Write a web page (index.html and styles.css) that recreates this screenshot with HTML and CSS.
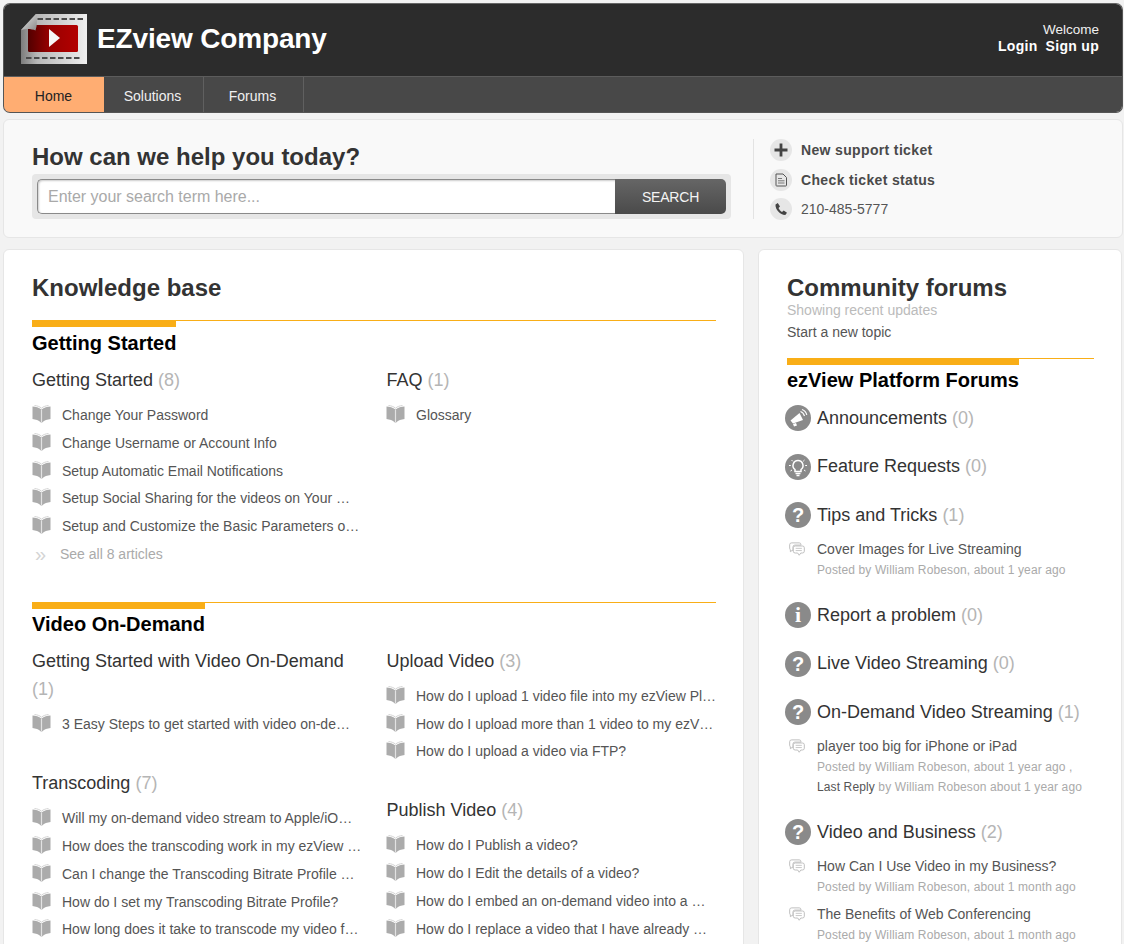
FILE: index.html
```html
<!DOCTYPE html>
<html lang="en">
<head>
<meta charset="utf-8">
<title>EZview Company</title>
<link rel="stylesheet" href="styles.css">
</head>
<body>
<svg class="defs" width="0" height="0" aria-hidden="true">
  <defs>
    <symbol id="book" viewBox="0 0 19 18">
      <path d="M0.500 1.500C3.500 1.500 7 2.500 9.500 4.500 12 2.500 15.500 1.500 18.500 1.500V14C15.500 14.300 12 15.500 10.500 17.300Q9.500 17.800 8.500 17.300C7 15.500 3.500 14.300 0.500 14Z" fill="#ababab"/>
      <path d="M9.500 4.500V17.300" stroke="#e2e2e2" stroke-width="1.200"/>
      <path d="M2.500 0.500C5 0.700 7.800 1.600 9.500 3.200 11.200 1.600 14 0.700 16.500 0.500" fill="none" stroke="#d4d4d4" stroke-width="1"/>
    </symbol>
    <symbol id="chat" viewBox="0 0 18 17">
      <path d="M3 1H11.500Q13.500 1 13.500 3V3.500H6.500Q4.500 3.500 4.500 5.500V9.500H3.500L1.500 11V8.800Q0.700 8.300 0.700 7V3Q0.700 1 3 1Z" fill="#fff" stroke="#bdbdbd" stroke-width="1.100"/>
      <path d="M7 4.500H15Q17.300 4.500 17.300 6.500V10.500Q17.300 12.500 15 12.500H13.300L11.500 15 9.800 12.500H7Q4.800 12.500 4.800 10.500V6.500Q4.800 4.500 7 4.500Z" fill="#fff" stroke="#bdbdbd" stroke-width="1.100"/>
      <path d="M7.500 7.200H14.500M7.500 9.700H14.500" stroke="#c8c8c8" stroke-width="1.100"/>
    </symbol>
  </defs>
</svg>

<div class="page">
  <header class="masthead">
    <div class="topbar">
      <div class="brand">
        <svg class="logo" width="66" height="50" viewBox="0 0 66 50" aria-hidden="true">
          <defs>
            <linearGradient id="frame" x1="0" y1="0" x2="1" y2="0">
              <stop offset="0" stop-color="#7c7c7c"/>
              <stop offset="0.25" stop-color="#b8b8b8"/>
              <stop offset="0.7" stop-color="#d8d8d8"/>
              <stop offset="1" stop-color="#f0f0f0"/>
            </linearGradient>
            <linearGradient id="reel" x1="0" y1="0" x2="1" y2="0">
              <stop offset="0" stop-color="#520000"/>
              <stop offset="0.45" stop-color="#9a0000"/>
              <stop offset="1" stop-color="#b30000"/>
            </linearGradient>
            <linearGradient id="curl" x1="0" y1="0" x2="1" y2="1">
              <stop offset="0" stop-color="#e8e8e8"/>
              <stop offset="1" stop-color="#8a8a8a"/>
            </linearGradient>
          </defs>
          <path d="M15 0H66V50H0V16Z" fill="url(#frame)"/>
          <rect x="7" y="11" width="50" height="27" rx="1.500" fill="url(#reel)"/>
          <path d="M15 0 0 16C5 14.500 11 15 14.500 16.500 16.500 11 16 5 15 0Z" fill="url(#curl)"/>
          <path d="M28 15 39 24 28 33Z" fill="#f6f6f6"/>
          <g fill="#4a4a4a">
            <rect x="16.500" y="4" width="5.500" height="2"/><rect x="24.500" y="4" width="5.500" height="2"/><rect x="32.500" y="4" width="5.500" height="2"/><rect x="40.500" y="4" width="5.500" height="2"/><rect x="48.500" y="4" width="5.500" height="2"/><rect x="56.500" y="4" width="5.500" height="2"/>
            <rect x="5" y="43" width="5.500" height="2"/><rect x="13" y="43" width="5.500" height="2"/><rect x="21" y="43" width="5.500" height="2"/><rect x="29" y="43" width="5.500" height="2"/><rect x="37" y="43" width="5.500" height="2"/><rect x="45" y="43" width="5.500" height="2"/><rect x="53" y="43" width="5.500" height="2"/>
          </g>
        </svg>
        <div class="company">EZview Company</div>
      </div>
      <div class="account">
        <div class="welcome">Welcome</div>
        <div class="account-links"><a>Login</a><a>Sign up</a></div>
      </div>
    </div>
    <nav class="nav">
      <a class="nav-item active">Home</a>
      <a class="nav-item">Solutions</a>
      <a class="nav-item">Forums</a>
    </nav>
  </header>

  <section class="help card">
    <div class="help-main">
      <h1 class="help-title">How can we help you today?</h1>
      <div class="search">
        <div class="search-input">Enter your search term here...</div>
        <div class="search-button">SEARCH</div>
      </div>
    </div>
    <ul class="help-links">
      <li><span class="help-icon"><svg width="16" height="16" viewBox="0 0 16 16"><path d="M6.600 1.500H9.400V6.600H14.500V9.400H9.400V14.500H6.600V9.400H1.500V6.600H6.600Z" fill="#444"/></svg></span><b>New support ticket</b></li>
      <li><span class="help-icon"><svg width="14" height="14" viewBox="0 0 14 14"><path d="M2 1H9L12.500 4.500V12.300Q12.500 13 11.800 13H2.700Q2 13 2 12.300Z" fill="none" stroke="#555" stroke-width="1"/><path d="M4 5.500H8M4 7.800H10.500M4 10H10.500" stroke="#777" stroke-width="1"/></svg></span><b>Check ticket status</b></li>
      <li><span class="help-icon"><svg width="14" height="14" viewBox="0 0 14 14"><path d="M1.500 2.500 3.800 1 6 4.500 4.500 6C5 7.500 6.500 9 8 10L9.700 8.500 13 10.800 11.300 13C6.500 13.200 1 7.500 1.500 2.500Z" fill="#444"/></svg></span>210-485-5777</li>
    </ul>
  </section>

  <div class="columns">
    <main class="card kb">
      <h2 class="card-title">Knowledge base</h2>

      <section class="group">
        <h3 class="group-title">Getting Started</h3>
        <div class="group-grid">
          <div class="topic-col">
            <div class="topic">
              <h4 class="topic-title">Getting Started <span class="count">(8)</span></h4>
              <ul class="articles">
                <li><svg class="book"><use href="#book"/></svg><span>Change Your Password</span></li>
                <li><svg class="book"><use href="#book"/></svg><span>Change Username or Account Info</span></li>
                <li><svg class="book"><use href="#book"/></svg><span>Setup Automatic Email Notifications</span></li>
                <li><svg class="book"><use href="#book"/></svg><span>Setup Social Sharing for the videos on Your …</span></li>
                <li><svg class="book"><use href="#book"/></svg><span>Setup and Customize the Basic Parameters o…</span></li>
              </ul>
              <div class="see-all"><span class="chevrons">»</span>See all 8 articles</div>
            </div>
          </div>
          <div class="topic-col">
            <div class="topic">
              <h4 class="topic-title">FAQ <span class="count">(1)</span></h4>
              <ul class="articles">
                <li><svg class="book"><use href="#book"/></svg><span>Glossary</span></li>
              </ul>
            </div>
          </div>
        </div>
      </section>

      <section class="group">
        <h3 class="group-title">Video On-Demand</h3>
        <div class="group-grid">
          <div class="topic-col">
            <div class="topic">
              <h4 class="topic-title">Getting Started with Video On-Demand <span class="count">(1)</span></h4>
              <ul class="articles">
                <li><svg class="book"><use href="#book"/></svg><span>3 Easy Steps to get started with video on-de…</span></li>
              </ul>
            </div>
            <div class="topic">
              <h4 class="topic-title">Transcoding <span class="count">(7)</span></h4>
              <ul class="articles">
                <li><svg class="book"><use href="#book"/></svg><span>Will my on-demand video stream to Apple/iO…</span></li>
                <li><svg class="book"><use href="#book"/></svg><span>How does the transcoding work in my ezView …</span></li>
                <li><svg class="book"><use href="#book"/></svg><span>Can I change the Transcoding Bitrate Profile …</span></li>
                <li><svg class="book"><use href="#book"/></svg><span>How do I set my Transcoding Bitrate Profile?</span></li>
                <li><svg class="book"><use href="#book"/></svg><span>How long does it take to transcode my video f…</span></li>
              </ul>
            </div>
          </div>
          <div class="topic-col">
            <div class="topic">
              <h4 class="topic-title">Upload Video <span class="count">(3)</span></h4>
              <ul class="articles">
                <li><svg class="book"><use href="#book"/></svg><span>How do I upload 1 video file into my ezView Pl…</span></li>
                <li><svg class="book"><use href="#book"/></svg><span>How do I upload more than 1 video to my ezV…</span></li>
                <li><svg class="book"><use href="#book"/></svg><span>How do I upload a video via FTP?</span></li>
              </ul>
            </div>
            <div class="topic">
              <h4 class="topic-title">Publish Video <span class="count">(4)</span></h4>
              <ul class="articles">
                <li><svg class="book"><use href="#book"/></svg><span>How do I Publish a video?</span></li>
                <li><svg class="book"><use href="#book"/></svg><span>How do I Edit the details of a video?</span></li>
                <li><svg class="book"><use href="#book"/></svg><span>How do I embed an on-demand video into a …</span></li>
                <li><svg class="book"><use href="#book"/></svg><span>How do I replace a video that I have already …</span></li>
              </ul>
            </div>
          </div>
        </div>
      </section>
    </main>

    <aside class="card forums">
      <h2 class="card-title">Community forums</h2>
      <div class="forums-sub">Showing recent updates</div>
      <a class="forums-new">Start a new topic</a>

      <section class="group forum-group">
        <h3 class="group-title">ezView Platform Forums</h3>
        <div class="forum-list">

        <div class="forum">
          <div class="forum-head">
            <span class="badge"><svg width="26" height="26" viewBox="0 0 26 26"><path d="M5.500 15.500 14.500 8 18 15 8 18.500Z" fill="#fff"/><path d="M8 19 11 18 12 20.500 9 21.500Z" fill="#fff"/><path d="M15.500 6.500Q18.500 7.500 19.500 11M17 4.500Q21 6 21.800 10" fill="none" stroke="#fff" stroke-width="1.100"/></svg></span>
            <span>Announcements <span class="count">(0)</span></span>
          </div>
        </div>

        <div class="forum">
          <div class="forum-head">
            <span class="badge"><svg width="26" height="26" viewBox="0 0 26 26"><path d="M13 6.500A5 5 0 0 1 16 15.500V17.500H10V15.500A5 5 0 0 1 13 6.500Z" fill="none" stroke="#fff" stroke-width="1.500"/><path d="M10.500 19.500H15.500M11.500 21.500H14.500" stroke="#fff" stroke-width="1.300"/><path d="M6.500 6 7.800 7.300M19.500 6 18.200 7.300M4 11.500H5.800M20.200 11.500H22M5.500 17 7 16M20.500 17 19 16" stroke="#fff" stroke-width="1"/></svg></span>
            <span>Feature Requests <span class="count">(0)</span></span>
          </div>
        </div>

        <div class="forum has-posts">
          <div class="forum-head">
            <span class="badge badge-text">?</span>
            <span>Tips and Tricks <span class="count">(1)</span></span>
          </div>
          <div class="post">
            <svg class="chat"><use href="#chat"/></svg>
            <div>
              <div class="post-title">Cover Images for Live Streaming</div>
              <div class="post-meta">Posted by William Robeson, about 1 year ago</div>
            </div>
          </div>
        </div>

        <div class="forum">
          <div class="forum-head">
            <span class="badge badge-text badge-info">i</span>
            <span>Report a problem <span class="count">(0)</span></span>
          </div>
        </div>

        <div class="forum">
          <div class="forum-head">
            <span class="badge badge-text">?</span>
            <span>Live Video Streaming <span class="count">(0)</span></span>
          </div>
        </div>

        <div class="forum has-posts">
          <div class="forum-head">
            <span class="badge badge-text">?</span>
            <span>On-Demand Video Streaming <span class="count">(1)</span></span>
          </div>
          <div class="post">
            <svg class="chat"><use href="#chat"/></svg>
            <div>
              <div class="post-title">player too big for iPhone or iPad</div>
              <div class="post-meta">Posted by William Robeson, about 1 year ago ,</div>
              <div class="post-meta"><span class="reply">Last Reply</span> by William Robeson about 1 year ago</div>
            </div>
          </div>
        </div>

        <div class="forum has-posts">
          <div class="forum-head">
            <span class="badge badge-text">?</span>
            <span>Video and Business <span class="count">(2)</span></span>
          </div>
          <div class="post">
            <svg class="chat"><use href="#chat"/></svg>
            <div>
              <div class="post-title">How Can I Use Video in my Business?</div>
              <div class="post-meta">Posted by William Robeson, about 1 month ago</div>
            </div>
          </div>
          <div class="post">
            <svg class="chat"><use href="#chat"/></svg>
            <div>
              <div class="post-title">The Benefits of Web Conferencing</div>
              <div class="post-meta">Posted by William Robeson, about 1 month ago</div>
            </div>
          </div>
        </div>

        </div>
      </section>
    </aside>
  </div>
</div>
</body>
</html>
```
FILE: styles.css
```css
* { box-sizing: border-box; }
html, body { margin: 0; padding: 0; height: 944px; overflow: hidden; }
body {
  background: #f2f2f2;
  font-family: "Liberation Sans", Arial, sans-serif;
  font-size: 14px;
  color: #555;
}
h1, h2, h3, h4, ul { margin: 0; padding: 0; font-size: inherit; }
ul { list-style: none; }
.defs { display: block; height: 0; }
.page { padding: 3px 1px 0 3px; }

.masthead { border: 1px solid #555; border-top-color: #666; border-radius: 7px; overflow: hidden; height: 110px; }
.topbar { height: 72px; background: #2c2c2c; display: flex; justify-content: space-between; padding: 10px 23px 0 17px; }
.brand { display: flex; align-items: flex-start; }
.logo { flex: none; }
.company { font-size: 28px; font-weight: bold; color: #fff; line-height: 32px; margin: 9px 0 0 10px; letter-spacing: -0.150px; }
.account { text-align: right; color: #f0f0f0; line-height: 16px; padding-top: 8px; }
.welcome { font-size: 13.500px; }
.account-links { font-weight: bold; color: #fff; display: flex; gap: 8px; justify-content: flex-end; letter-spacing: 0.300px; }
.nav { height: 36px; background: #484848; border-top: 1px solid #5c5c5c; display: flex; }
.nav-item { width: 100px; line-height: 38px; text-align: center; color: #f0f0f0; border-right: 1px solid #606060; padding-right: 2px; }
.nav-item.active { background: #ffad72; color: #222; border-right: 0; padding-right: 1px; }

.card { background: #fff; border: 1px solid #e6e6e6; border-radius: 6px; }
.help { background: #f9f9f9; margin-top: 6px; height: 119px; display: flex; padding: 18px 0 0 28px; }
.help-main { width: 699px; }
.help-title { font-size: 24px; font-weight: bold; color: #333; line-height: 38px; }
.search { height: 45px; margin-top: -2px; background: #e6e6e6; border-radius: 4px; padding: 5px; display: flex; }
.search-input { flex: 1; border: 1px solid #8a8a8a; border-right: 0; border-radius: 5px 0 0 5px; background: #fff; box-shadow: inset 1px 1px 2px #ccc; font-size: 16px; line-height: 33px; color: #a9a9a9; padding-left: 10px; letter-spacing: -0.020px; }
.search-button { width: 111px; background: linear-gradient(#666, #4a4a4a); color: #f4f4f4; border-radius: 0 5px 5px 0; text-align: center; line-height: 36px; letter-spacing: -0.200px; }
.help-links { margin-left: 22px; margin-top: 1px; height: 80px; border-left: 1px solid #e3e3e3; padding-left: 16px; line-height: 22px; }
.help-links li { display: flex; align-items: center; gap: 9px; height: 22px; margin-bottom: 7.500px; color: #555; }
.help-links b { color: #4a4a4a; letter-spacing: 0.350px; }
.help-icon { width: 22px; height: 22px; border-radius: 50%; background: #e6e6e6; display: flex; align-items: center; justify-content: center; }

.columns { display: flex; gap: 14px; margin-top: 11px; align-items: flex-start; }
.kb { width: 741px; padding: 24px 27px 20px 28px; }
.forums { width: 364px; padding: 24px 27px 30px 28px; }
.card-title { font-size: 24px; font-weight: bold; color: #333; line-height: 28px; }

.group { border-top: 1px solid #f9ae17; margin-top: 18px; }
.group + .group { margin-top: 20px; }
.group-title { display: inline-block; vertical-align: top; margin-top: -1px; border-top: 7px solid #f9ae17; font-size: 20px; font-weight: bold; color: #000; line-height: 24px; padding-top: 4px; }
.group + .group .group-title { padding-top: 3px; }
.group-grid { display: grid; grid-template-columns: 329px 329px; column-gap: 25.500px; margin-top: 11px; }
.group + .group .group-grid { margin-top: 10.750px; }
.topic { padding-bottom: 30.250px; }
.topic-title { font-size: 18px; font-weight: normal; color: #333; line-height: 28.500px; }
.count { color: #b5b5b5; }
.articles { margin-top: 7.500px; }
.topic-col + .topic-col .articles { margin-left: -0.500px; }
.articles li { display: flex; height: 27.750px; line-height: 27px; white-space: nowrap; }
.book { width: 19px; height: 18px; flex: none; margin: 3px 11px 0 0; }
.see-all { color: #aaa; line-height: 28px; display: flex; margin-top: -0.750px; }
.chevrons { display: block; width: 28px; padding-left: 3px; color: #d4d4d4; font-size: 20px; }
.topic:has(.see-all) { padding-bottom: 14px; }

.forums-sub { color: #bbb; line-height: 18px; margin-top: -1px; }
.forums-new { display: block; color: #555; line-height: 20px; margin-top: 3px; }
.forum-group { margin-top: 16px; }
.forum-group .group-title { padding-top: 3px; }
.forum-list { padding-top: 13px; }
.forum { min-height: 48.500px; }
.forum-head { display: flex; align-items: center; font-size: 18px; color: #333; height: 26px; margin-left: -2px; gap: 6px; }
.forum.has-posts { min-height: 0; padding-bottom: 22px; }
.badge { width: 26px; height: 26px; flex: none; border-radius: 50%; background: #8a8a8a; display: block; }
.badge svg { display: block; }
.badge-text { color: #fff; font-size: 20px; font-weight: bold; text-align: center; line-height: 26px; }
.badge-info { font-family: "Liberation Serif", serif; font-size: 22px; }
.post { display: flex; margin-top: 11px; }
.post + .post { margin-top: 7px; }
.chat { width: 16px; height: 15px; flex: none; margin: 3px 12px 0 2px; }
.post-title { line-height: 20px; color: #555; }
.post-meta { font-size: 12px; color: #aaa; line-height: 20px; margin-top: 1px; letter-spacing: 0.120px; }
.post-meta + .post-meta { margin-top: 0; }
.reply { color: #555; }
```
